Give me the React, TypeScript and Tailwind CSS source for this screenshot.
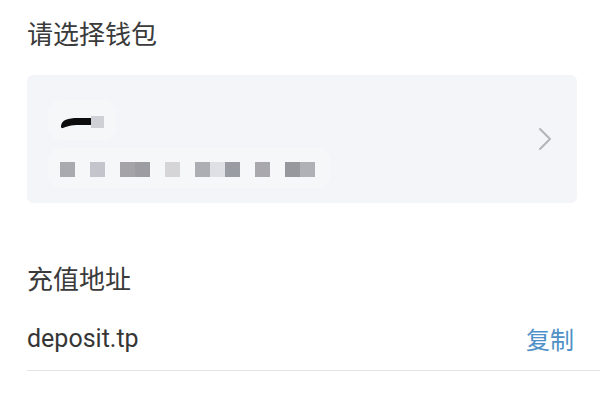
const cells = [
  { x: 0, c: "bg-[#a9aab0]" },
  { x: 30, c: "bg-[#c4c5cc]" },
  { x: 60, c: "bg-[#a4a4a8]" },
  { x: 75, c: "bg-[#9c9ca2]" },
  { x: 105, c: "bg-[#d5d5d8]" },
  { x: 135, c: "bg-[#adaeb3]" },
  { x: 150, c: "bg-[#dfe0e5]" },
  { x: 165, c: "bg-[#9a9ca3]" },
  { x: 195, c: "bg-[#a8a8ad]" },
  { x: 225, c: "bg-[#97989e]" },
  { x: 240, c: "bg-[#b0b1b6]" },
]

export default function App() {
  const cjk = { fontFamily: '"Noto Sans CJK SC", "Noto Sans", sans-serif' }

  return (
    <div className="w-[600px] h-[400px] bg-white flex flex-col pl-[27px] overflow-hidden">
      {/* wallet picker */}
      <div className="h-[64px] flex items-center text-[26px] text-[#3a3a3a]" style={cjk}>
        请选择钱包
      </div>

      <div className="mt-[11px] h-[128px] w-[550px] rounded-md bg-[#f3f5f8] flex items-center pr-[25px]">
        <div className="flex-1 h-full flex flex-col pl-[21px]">
          <div className="mt-[25px] w-fit rounded-xl bg-[#f6f7f9] px-[12px] pt-[16px] pb-[11px] flex items-start">
            <svg width="31" height="13" viewBox="0 0 31 13">
              <path
                d="M1 10 C1.5 4, 8 2, 18 2 L31 2 L31 9 L19 9 C11 9, 6 10.5, 3 12 C1.5 12.5, 0.8 11.5, 1 10 Z"
                fill="#0d0d0d"
              />
            </svg>
            <div className="w-[13px] h-[12px] bg-[#cfd0d5]" />
          </div>
          <div className="mt-[8px] w-fit rounded-xl bg-[#f6f7f9] px-[12px] pt-[14px] pb-[11px]">
            <div className="relative h-[15px] w-[258px]">
              {cells.map((cell) => (
                <div
                  key={cell.x}
                  className={`absolute top-0 w-[15px] h-[15px] ${cell.c}`}
                  style={{ left: cell.x }}
                />
              ))}
            </div>
          </div>
        </div>
        <svg width="14" height="24" viewBox="0 0 14 24" fill="none">
          <path d="M2 2 L12 12 L2 22" stroke="#b5b5b8" strokeWidth="2" strokeLinecap="round" strokeLinejoin="round" />
        </svg>
      </div>

      {/* deposit address */}
      <div className="mt-[52px] h-[44px] flex items-center text-[26px] text-[#3a3a3a]" style={cjk}>
        充值地址
      </div>

      <div className="h-[71px] pt-[8px] flex items-center justify-between pr-[26px]">
        <span className="text-[25px] text-[#363636]" style={{ fontFamily: "Roboto, sans-serif" }}>
          deposit.tp
        </span>
        <span className="text-[24px] text-[#4f90c6]" style={cjk}>
          复制
        </span>
      </div>
      <div className="h-px bg-[#e4e4e4]" />
    </div>
  )
}
